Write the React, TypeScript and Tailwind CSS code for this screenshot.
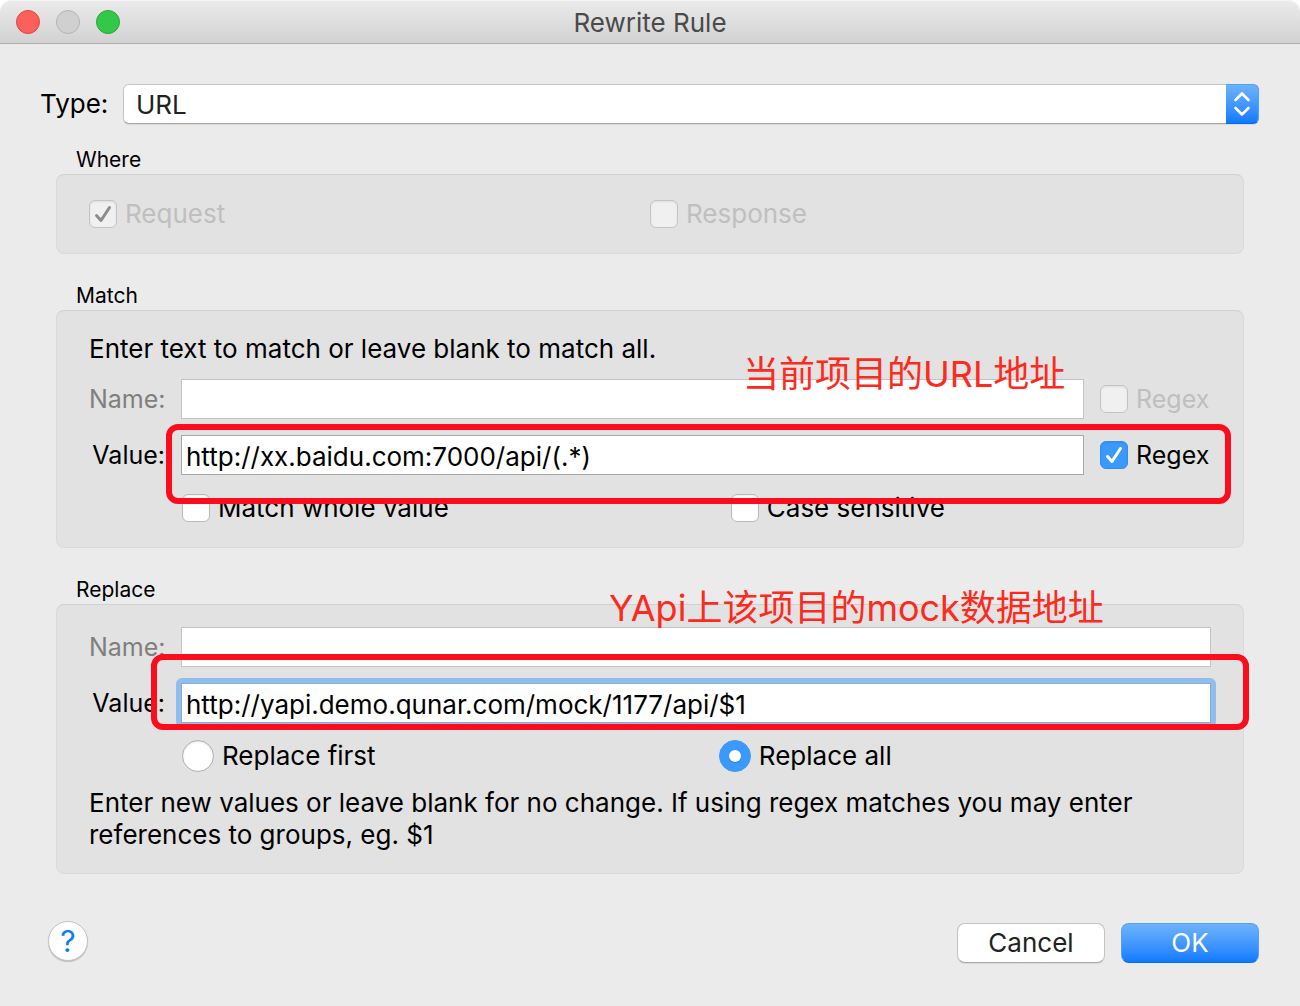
import { useState } from "react";
import type { ReactNode } from "react";

function CheckMark({ className }: { className: string }) {
  return (
    <svg viewBox="0 0 28 28" aria-hidden="true" className={`pointer-events-none absolute inset-0 size-7 ${className}`}>
      <path d="M7.5 15.5 L12 20.5 L20.5 7.5" fill="none" stroke="currentColor" strokeWidth="3" strokeLinecap="round" strokeLinejoin="round" />
    </svg>
  );
}

function CheckBox({ label, initial = false, disabled = false }: { label: string; initial?: boolean; disabled?: boolean }) {
  const [checked, setChecked] = useState(initial);
  return (
    <label className={`flex items-center gap-2 ${disabled ? "text-[#bfbfbf]" : "text-black"}`}>
      <span className="relative block size-7 shrink-0">
        <input
          type="checkbox"
          checked={checked}
          disabled={disabled}
          onChange={(e) => setChecked(e.target.checked)}
          className="block size-7 appearance-none rounded-md border border-[#b9b9b9] bg-white shadow-[inset_0_1px_2px_rgba(0,0,0,0.08)] enabled:checked:border-[#2f8df5] enabled:checked:bg-[#3b99fc] disabled:border-[#c4c4c4] disabled:bg-[#f0f0f0]"
        />
        {checked && <CheckMark className={disabled ? "text-[#8c8c8c]" : "text-white"} />}
      </span>
      <span className="leading-8">{label}</span>
    </label>
  );
}

function RadioButton({ label, value, current, onPick }: { label: string; value: string; current: string; onPick: (v: string) => void }) {
  return (
    <label className="flex items-center gap-2">
      <span className="relative grid size-8 shrink-0 place-items-center">
        <input
          type="radio"
          name="replace-mode"
          value={value}
          checked={current === value}
          onChange={() => onPick(value)}
          className="col-start-1 row-start-1 size-8 appearance-none rounded-full border border-[#b0b0b0] bg-white shadow-[inset_0_1px_2px_rgba(0,0,0,0.12)] checked:border-[#3b99fc] checked:bg-[#3b99fc] checked:shadow-none"
        />
        {current === value && <span className="pointer-events-none z-10 col-start-1 row-start-1 size-3 rounded-full bg-white shadow-[0_1px_1px_rgba(0,0,0,0.2)]" />}
      </span>
      <span className="leading-8">{label}</span>
    </label>
  );
}

function Group({ title, className, children }: { title: string; className: string; children: ReactNode }) {
  return (
    <fieldset className="mr-[15px] ml-4 min-w-0">
      <legend className="block px-5 text-[21px] leading-7">{title}</legend>
      <div className={`relative rounded-lg border border-[#dadada] border-t-[#d0d0d0] bg-[#e2e2e2] px-8 ${className}`}>{children}</div>
    </fieldset>
  );
}

function FieldLabel({ htmlFor, dim = false, children }: { htmlFor: string; dim?: boolean; children: ReactNode }) {
  return (
    <label htmlFor={htmlFor} className={`w-[76px] shrink-0 text-right text-[25px] leading-10 whitespace-nowrap ${dim ? "text-[#7f7f7f]" : "text-black"}`}>
      {children}
    </label>
  );
}

function RegexOption({ initial = false, disabled = false }: { initial?: boolean; disabled?: boolean }) {
  return (
    <div className="w-[111px] shrink-0 text-[25px]">
      <CheckBox label="Regex" initial={initial} disabled={disabled} />
    </div>
  );
}

const field = "h-10 min-w-0 flex-1 border bg-white px-1 pt-0.5 text-black outline-none";

export default function App() {
  const [mode, setMode] = useState("all");
  return (
    <div className="min-h-screen bg-white font-['Inter','Noto_Sans_CJK_SC',sans-serif] text-[26px] text-black">
      <div className="flex min-h-screen flex-col rounded-t-xl bg-[#ebebeb]">
        <header className="relative flex h-11 items-center justify-center rounded-t-xl border-b border-[#adadad] bg-linear-to-b from-[#ebebeb] to-[#d2d2d2] shadow-[inset_0_1px_0_#f6f6f6]">
          <div className="absolute inset-y-0 left-4 flex items-center gap-4">
            <button type="button" aria-label="Close" className="size-6 rounded-full border border-[#e0443e] bg-[#fc605b]" />
            <button type="button" aria-label="Minimize" disabled className="size-6 rounded-full border border-[#b4b4b4] bg-[#d0d0d0]" />
            <button type="button" aria-label="Zoom" className="size-6 rounded-full border border-[#25a833] bg-[#34c84a]" />
          </div>
          <h1 className="pt-0.5 text-[#4a4a4a]">Rewrite Rule</h1>
        </header>

        <main className="pt-10 pr-[41px] pl-10">
          <div className="flex items-center">
            <label htmlFor="rule-type" className="w-[83px] shrink-0 leading-10">Type:</label>
            <div className="relative h-10 flex-1">
              <select
                id="rule-type"
                className="h-10 w-full appearance-none rounded-md border border-[#c4c4c4] border-b-[#a8a8a8] bg-white px-3 text-[#222] shadow-[0_1px_1px_rgba(0,0,0,0.08)] outline-none"
              >
                <option>URL</option>
                <option>Host</option>
                <option>Path</option>
                <option>Body</option>
              </select>
              <span className="pointer-events-none absolute inset-y-0 right-0 grid w-[33px] place-items-center rounded-r-md border border-l-0 border-[#4f9ffb] border-b-[#0a66f5] bg-linear-to-b from-[#6db3fa] to-[#0a7aff]">
                <svg viewBox="0 0 32 38" aria-hidden="true" className="h-[38px] w-8">
                  <path d="M9.5 15 L16 8.5 L22.5 15 M9.5 23 L16 29.5 L22.5 23" fill="none" stroke="#fff" strokeWidth="2.6" strokeLinecap="round" strokeLinejoin="round" />
                </svg>
              </span>
            </div>
          </div>

          <div className="mt-[22px] flex flex-col gap-7">
            <Group title="Where" className="py-[23px]">
              <div className="grid grid-cols-2">
                <CheckBox label="Request" initial disabled />
                <CheckBox label="Response" disabled />
              </div>
            </Group>

            <Group title="Match" className="pt-[22px] pb-[23px]">
              <p className="leading-8">Enter text to match or leave blank to match all.</p>
              <div className="mt-[14px] flex items-center gap-4">
                <FieldLabel htmlFor="match-name" dim>Name:</FieldLabel>
                <input id="match-name" disabled className={`${field} border-[#c4c4c4]`} />
                <RegexOption disabled />
              </div>
              <div className="mt-4 flex items-center gap-4">
                <FieldLabel htmlFor="match-value">Value:</FieldLabel>
                <input id="match-value" defaultValue="http://xx.baidu.com:7000/api/(.*)" className={`${field} border-[#a8a8a8]`} />
                <RegexOption initial />
              </div>
              <div className="mt-[17px] ml-[93px] grid grid-cols-[8fr_7fr]">
                <CheckBox label="Match whole value" />
                <CheckBox label="Case sensitive" />
              </div>
              <div className="pointer-events-none absolute top-[113px] right-3 left-[109px] h-20 rounded-xl border-[6px] border-[#fc0d1b]" />
              <p className="pointer-events-none absolute top-[43px] left-[686px] text-4xl whitespace-nowrap text-[#fd2a1e]">当前项目的URL地址</p>
            </Group>

            <Group title="Replace" className="py-[22px]">
              <div className="flex items-center gap-4">
                <FieldLabel htmlFor="replace-name" dim>Name:</FieldLabel>
                <input id="replace-name" disabled className={`${field} border-[#c4c4c4]`} />
              </div>
              <div className="mt-4 flex items-center gap-4">
                <FieldLabel htmlFor="replace-value">Value:</FieldLabel>
                <div className="flex min-w-0 flex-1 rounded-xs bg-[#90bfee] shadow-[0_0_0_5px_#90bfee]">
                  <input
                    id="replace-value"
                    defaultValue="http://yapi.demo.qunar.com/mock/1177/api/$1"
                    className={`${field} border-[#86aedb]`}
                  />
                </div>
              </div>
              <div className="mt-[17px] ml-[93px] grid grid-cols-[12fr_11fr]">
                <RadioButton label="Replace first" value="first" current={mode} onPick={setMode} />
                <RadioButton label="Replace all" value="all" current={mode} onPick={setMode} />
              </div>
              <p className="mt-[15px] leading-8">
                Enter new values or leave blank for no change. If using regex matches you may enter references to groups, eg. $1
              </p>
              <div className="pointer-events-none absolute top-[49px] -right-1.5 left-[94px] h-[76px] rounded-xl border-[6px] border-[#fc0d1b]" />
              <p className="pointer-events-none absolute -top-[17px] left-[552px] text-4xl whitespace-nowrap text-[#fd2a1e]">YApi上该项目的mock数据地址</p>
            </Group>
          </div>

          <footer className="mt-[47px] flex items-start justify-between pl-2">
            <button
              type="button"
              aria-label="Help"
              className="grid size-10 place-items-center rounded-full border border-[#c4c4c4] bg-white text-[30px] leading-9 text-[#0a7aff] shadow-[0_1px_1px_rgba(0,0,0,0.2)]"
            >
              ?
            </button>
            <div className="mt-0.5 flex gap-4">
              <button type="button" className="h-10 w-[148px] rounded-lg border border-[#c4c4c4] border-b-[#a8a8a8] bg-white leading-9 text-[#222] shadow-[0_1px_1px_rgba(0,0,0,0.08)]">
                Cancel
              </button>
              <button type="button" className="h-10 w-[138px] rounded-lg border border-[#4f9ffb] border-b-[#0a66f5] bg-linear-to-b from-[#6db3fa] to-[#0a7aff] leading-9 text-white">
                OK
              </button>
            </div>
          </footer>
        </main>
      </div>
    </div>
  );
}
